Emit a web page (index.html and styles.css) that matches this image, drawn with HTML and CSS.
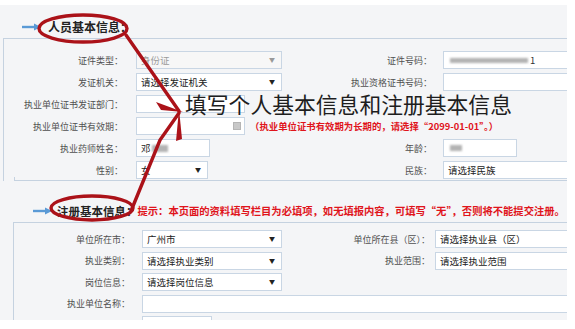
FILE: index.html
```html
<!DOCTYPE html>
<html lang="zh-CN">
<head>
<meta charset="utf-8">
<link rel="stylesheet" href="styles.css">
</head>
<body>
<div class="page">
  <div class="sec-head head1">
    <svg class="barrow" width="20" height="8" viewBox="0 0 20 8"><path d="M0 4H14" stroke="#5a9ad6" stroke-width="2.4"/><path d="M12 0.5L19 4L12 7.5Z" fill="#5a9ad6"/></svg>
    <span class="sec-title">人员基本信息：</span>
  </div>
  <div class="panel panel1">
    <div class="row">
      <div class="lbl">证件类型：</div>
      <div class="fld"><div class="sel disabled">身份证<span class="caret">▼</span></div></div>
      <div class="lbl2">证件号码：</div>
      <div class="fld2"><div class="inp"><span class="blur b-id"></span><span class="idend">1</span></div></div>
    </div>
    <div class="row">
      <div class="lbl">发证机关：</div>
      <div class="fld"><div class="sel">请选择发证机关<span class="caret">▼</span></div></div>
      <div class="lbl2">执业资格证书号码：</div>
      <div class="fld2"><div class="inp"></div></div>
    </div>
    <div class="row">
      <div class="lbl">执业单位证书发证部门：</div>
      <div class="fld"><div class="inp w110"></div></div>
    </div>
    <div class="row">
      <div class="lbl">执业单位证书有效期：</div>
      <div class="fld wide"><div class="inp w110 date"><span class="cal"></span></div><span class="note">（执业单位证书有效期为长期的，请选择“2099-01-01”。）</span></div>
    </div>
    <div class="row">
      <div class="lbl">执业药师姓名：</div>
      <div class="fld"><div class="inp w75">邓<span class="blur b-name"></span></div></div>
      <div class="lbl2">年龄：</div>
      <div class="fld2"><div class="inp w74"><span class="blur b-age"></span></div></div>
    </div>
    <div class="row">
      <div class="lbl">性别：</div>
      <div class="fld"><div class="sel w73">女<span class="caret">▼</span></div></div>
      <div class="lbl2">民族：</div>
      <div class="fld2"><div class="inp">请选择民族</div></div>
    </div>
    <div class="panel-bottom"></div>
  </div>
  <div class="sec-head head2">
    <svg class="barrow" width="20" height="8" viewBox="0 0 20 8"><path d="M0 4H14" stroke="#5a9ad6" stroke-width="2.4"/><path d="M12 0.5L19 4L12 7.5Z" fill="#5a9ad6"/></svg>
    <span class="sec-title t2">注册基本信息：</span>
    <span class="hint">提示：本页面的资料填写栏目为必填项，如无填报内容，可填写“无”，否则将不能提交注册。</span>
  </div>
  <div class="panel panel2">
    <div class="row r2">
      <div class="lbl">单位所在市：</div>
      <div class="fld"><div class="sel">广州市<span class="caret">▼</span></div></div>
      <div class="lbl2">单位所在县（区）：</div>
      <div class="fld2"><div class="inp">请选择执业县（区）</div></div>
    </div>
    <div class="row r2">
      <div class="lbl">执业类别：</div>
      <div class="fld"><div class="sel">请选择执业类别<span class="caret">▼</span></div></div>
      <div class="lbl2">执业范围：</div>
      <div class="fld2"><div class="inp">请选择执业范围</div></div>
    </div>
    <div class="row r2">
      <div class="lbl">岗位信息：</div>
      <div class="fld"><div class="sel">请选择岗位信息<span class="caret">▼</span></div></div>
    </div>
    <div class="row r2">
      <div class="lbl">执业单位名称：</div>
      <div class="fld full"><div class="inp"></div></div>
    </div>
    <div class="row r2">
      <div class="lbl">地址：</div>
      <div class="fld"><div class="inp w70"></div></div>
    </div>
  </div>
</div>

<div class="bigtext">填写个人基本信息和注册基本信息</div>

<svg class="marks" width="575" height="329" viewBox="0 0 575 329">
  <g fill="none" stroke="#ab1219" stroke-width="3.4" stroke-linecap="round">
    <ellipse cx="83" cy="28.5" rx="44" ry="13.5"/>
    <ellipse cx="92" cy="208" rx="41" ry="12"/>
    <path d="M126 35 L179 111"/>
    <path d="M131 211 L160 140 L179 113"/>
  </g>
  <g fill="#ab1219">
    <polygon points="183,112 156,102 161,110"/>
    <polygon points="179,109 176,141 182,139"/>
  </g>
</svg>
</body>
</html>
```

FILE: styles.css
```css
* { box-sizing: border-box; }
html, body { margin: 0; padding: 0; background: #fff; }
body {
  width: 575px;
  height: 329px;
  position: relative;
  overflow: hidden;
  font-family: "Noto Sans CJK SC", "Noto Sans", sans-serif;
  color: #333;
}
.page {
  margin-top: 5px;
  width: 567px;
  height: 315px;
  background: #f4f5f7;
  overflow: hidden;
}
.sec-head {
  display: flex;
  align-items: center;
  white-space: nowrap;
}
.head1 { height: 33px; padding: 15px 0 4px 22px; }
.head2 { height: 41px; padding: 23px 0 4px 33px; }
.barrow { flex: none; margin-right: 6px; }
.head2 .barrow { margin-right: 4px; }
.sec-title {
  font-size: 12px;
  line-height: 14px;
  font-weight: 700;
  color: #222;
}
.t2 { font-size: 11.5px; }
.hint {
  font-size: 10.3px;
  line-height: 14px;
  font-weight: 700;
  color: #e0141b;
}
.panel {
  border-top: 1px solid #c5d2e0;
  border-left: 1px solid #c5d2e0;
  display: flex;
  flex-direction: column;
}
.panel1 { margin-left: 3px; height: 143px; padding-top: 12px; gap: 4px; position: relative; }
.panel2 { margin-left: 13px; padding-top: 7px; gap: 3.5px; }
.panel-bottom {
  position: absolute;
  left: 10px;
  right: 0;
  bottom: 0;
  height: 4px;
  border-bottom: 1px solid #c5d2e0;
  border-left: 1px solid #c5d2e0;
}
.row {
  display: flex;
  align-items: center;
  height: 18px;
  white-space: nowrap;
}
.lbl, .lbl2 {
  font-size: 9px;
  color: #505050;
  text-align: right;
  flex: none;
}
.panel1 .lbl { width: 119px; margin-right: 13px; }
.panel1 .fld { width: 146px; }
.panel1 .lbl2 { width: 150px; margin-right: 11px; }
.panel1 .fld2 { width: 130px; }
.panel2 .lbl { width: 116px; margin-right: 12px; }
.panel2 .fld { width: 140px; }
.panel2 .lbl2 { width: 148px; margin-right: 5px; }
.panel2 .fld2 { width: 140px; }
.fld, .fld2 { flex: none; height: 18px; display: flex; align-items: center; }
.fld.wide { width: 420px; }
.fld.full { width: 440px; }
.inp, .sel {
  height: 18px;
  width: 100%;
  flex: none;
  background: #fff;
  border: 1px solid #c9d6e4;
  font-size: 9.5px;
  line-height: 16px;
  color: #222;
  padding-left: 4px;
  position: relative;
  display: flex;
  align-items: center;
}
.sel .caret {
  position: absolute;
  right: 6px;
  top: 0;
  font-size: 6px;
  line-height: 16px;
  color: #222;
}
.sel.disabled { background: #f7f7f7; color: #9a9a9a; }
.sel.disabled .caret { color: #999; }
.w110 { width: 109px; }
.w75 { width: 74px; }
.w74 { width: 74px; }
.w73 { width: 72px; }
.w70 { width: 70px; }
.cal {
  position: absolute;
  right: 3px;
  top: 4px;
  width: 8px;
  height: 8px;
  background: #c8c8c8;
  border: 1px solid #b5b5b5;
}
.note {
  margin-left: 5px;
  font-size: 9.4px;
  font-weight: 700;
  color: #e0141b;
}
.blur {
  display: inline-block;
  background: #9a9a9a;
  filter: blur(1.3px);
  opacity: 0.75;
}
.b-id { width: 78px; height: 5px; margin-left: 2px; }
.idend { margin-left: 2px; color: #333; }
.b-name { width: 16px; height: 7px; margin-left: 1px; }
.b-age { width: 12px; height: 6px; margin-left: 2px; }
.bigtext {
  position: absolute;
  left: 185px;
  top: 93px;
  font-size: 21.8px;
  line-height: 22px;
  color: #1e1e1e;
  font-weight: 400;
  white-space: nowrap;
}
.marks {
  position: absolute;
  left: 0;
  top: 0;
  pointer-events: none;
}
```
